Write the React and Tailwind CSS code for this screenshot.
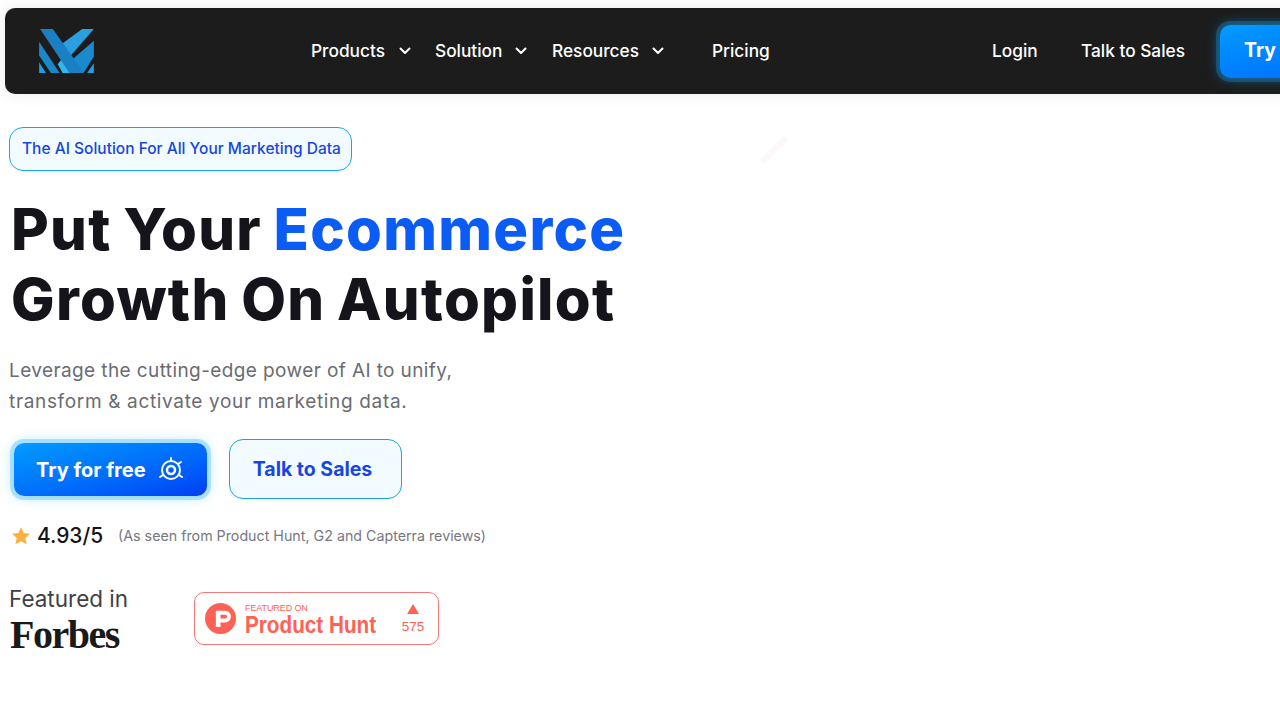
import React from "react";

const F = { fontFamily: '"Inter", "Liberation Sans", sans-serif' };

function Chevron() {
  return (
    <svg width="12" height="8" viewBox="0 0 12 8" fill="none" className="shrink-0">
      <path d="M1.5 1.5 L6 6 L10.5 1.5" stroke="#fff" strokeWidth="2" strokeLinecap="round" strokeLinejoin="round" />
    </svg>
  );
}

function Logo() {
  return (
    <svg width="55" height="44" viewBox="0 0 56 45" className="shrink-0">
      <polygon points="56,12 56,28 46,44 40,44 33,32" fill="#1a8ad0" />
      <polygon points="56,35 56,45 49,45" fill="#1f9ee0" />
      <polygon points="0,13 0,27 12,45 21,45" fill="#1b87c9" />
      <polygon points="0,34 0,45 7,45" fill="#1f9ee0" />
      <polygon points="44,0 56,0 30,30 21,17" fill="#2a9fe0" />
      <polygon points="19,36 26,27 33,45 24,45" fill="#2fb8ea" />
      <polygon points="1,0 14,0 46,45 31,45" fill="#1b7fc4" />
    </svg>
  );
}

function Target({ size = 28 }) {
  return (
    <svg width={size} height={size} viewBox="0 0 28 28" fill="none" stroke="#fff" className="shrink-0">
      <circle cx="14" cy="14" r="9" strokeWidth="2" />
      <circle cx="14" cy="14" r="4" strokeWidth="2.5" />
      <path d="M14 5V2M6 19l-3 2M22 19l3 2M21 8l3-2" strokeWidth="2" strokeLinecap="round" />
    </svg>
  );
}

export default function App() {
  return (
    <div style={F} className="relative w-[1280px] h-[720px] overflow-hidden bg-white">
      <svg width="30" height="30" viewBox="0 0 30 30" className="absolute left-[758px] top-[135px]">
        <path d="M6 25L26 5" stroke="#fef8fd" strokeWidth="7" strokeLinecap="round" />
      </svg>
      <nav className="ml-[5px] mt-2 w-[1500px] h-[86px] flex items-center rounded-[10px] bg-[#1c1c1c] shadow-[0_0_16px_rgba(0,0,0,0.08)] text-white text-[17.3px] font-medium">
        <div className="ml-[34px] mr-[217px] shrink-0"><Logo /></div>
        <div className="flex items-center gap-2 w-[124px] shrink-0"><span>Products</span><span className="ml-[6px]"><Chevron /></span></div>
        <div className="flex items-center gap-2 w-[117px] shrink-0"><span>Solution</span><span className="ml-[5px]"><Chevron /></span></div>
        <div className="flex items-center gap-2 w-[160px] shrink-0"><span>Resources</span><span className="ml-[5px]"><Chevron /></span></div>
        <span className="w-[280px] shrink-0">Pricing</span>
        <span className="w-[89px] shrink-0">Login</span>
        <span className="w-[139px] shrink-0">Talk to Sales</span>
        <div className="h-[53px] w-[200px] shrink-0 rounded-[10px] pl-[24px] flex items-center text-[19.5px] font-bold bg-gradient-to-br from-[#0a9bff] to-[#0b5cff] shadow-[0_0_0_4px_rgba(30,150,220,0.3),0_0_14px_rgba(0,170,255,0.6)]">Try</div>
      </nav>

      <div className="pl-[9px] pt-[33px] flex flex-col items-start">
        <div className="h-[44px] pl-3 pr-[10px] flex items-center rounded-[14px] border border-[#18a5ea] bg-[#f2fbff] text-[#1746e0] text-[15.5px] font-medium">
          The AI Solution For All Your Marketing Data
        </div>
        <h1 className="mt-[23px] ml-[2px] text-[58px] leading-[70px] font-extrabold tracking-[1.3px] [word-spacing:-2.5px] text-[#14141a]">
          <div>Put Your <span className="text-[#0b5cf5]">Ecommerce</span></div>
          <div>Growth On Autopilot</div>
        </h1>
        <p className="mt-[21px] text-[19px] leading-[31px] text-[#6b6b72]">
          <span className="tracking-[0.4px]">Leverage the cutting-edge power of AI to unify,</span><br />
          <span className="tracking-[0.66px]">transform &amp; activate your marketing data.</span>
        </p>
        <div className="mt-[22px] flex items-center">
          <div className="ml-[5px] mt-[1px] w-[193px] h-[53px] rounded-[10px] pl-[22px] flex items-center gap-[11px] text-white text-[20px] font-bold bg-gradient-to-br from-[#0a9bff] to-[#0b3cf5] shadow-[0_0_0_4px_rgba(120,210,250,0.55),0_0_14px_rgba(80,190,250,0.55)]">
            <span>Try for free</span><Target />
          </div>
          <div className="ml-[22px] w-[173px] h-[60px] rounded-[14px] border border-[#18a5d8] bg-[#f2fbff] flex items-center justify-center pr-[6px] pt-[1px] text-[#1746e0] text-[19.5px] font-bold">
            Talk to Sales
          </div>
        </div>
        <div className="mt-[21px] ml-[2px] flex items-center">
          <svg width="20" height="20" viewBox="0 0 24 24" className="shrink-0"><path fill="#fbb040" d="M12 1.5l3.2 6.9 7.5.9-5.5 5.1 1.5 7.4L12 18.2l-6.7 3.6 1.5-7.4L1.3 9.3l7.5-.9z" /></svg>
          <span className="ml-[6px] text-[20.9px] font-medium text-[#14141a]">4.93/5</span>
          <span className="ml-[15px] text-[14.25px] text-[#77777e]">(As seen from Product Hunt, G2 and Capterra reviews)</span>
        </div>
        <div className="mt-[34px] flex items-start">
          <div className="w-[185px]">
            <div className="text-[22.5px] leading-[28px] text-[#3f3f46]">Featured in</div>
            <div className="mt-[3px] ml-[1px] text-[40px] leading-[38px] font-bold tracking-[-1.5px] text-[#1a1a1a]" style={{ fontFamily: '"Liberation Serif", serif' }}>Forbes</div>
          </div>
          <div className="mt-[7px] w-[245px] h-[53px] rounded-[10px] border border-[#f3797a] bg-white flex items-center pl-[10px] text-[#ff6154]" style={{ fontFamily: '"Liberation Sans", sans-serif' }}>
            <svg width="31" height="31" viewBox="0 0 40 40" className="shrink-0">
              <circle cx="20" cy="20" r="20" fill="#ff6154" />
              <path fill="#fff" d="M14 10h12a7.5 7.5 0 0 1 0 15h-6v6h-6zM20 15v5h6a2.5 2.5 0 0 0 0-5z" />
            </svg>
            <div className="ml-[9px] w-[156px] pt-[3px]">
              <div className="text-[9px] leading-[9px] tracking-[-0.1px] font-medium">FEATURED ON</div>
              <div className="text-[23px] leading-[24px] font-bold origin-left scale-x-[0.9] whitespace-nowrap">Product Hunt</div>
            </div>
            <div className="flex flex-col items-center w-[24px]">
              <svg width="12" height="10" viewBox="0 0 12 10"><polygon points="6,0 12,10 0,10" fill="#ff6154" /></svg>
              <div className="mt-[6px] text-[13.5px] leading-[14px]">575</div>
            </div>
          </div>
        </div>
      </div>
    </div>
  );
}
